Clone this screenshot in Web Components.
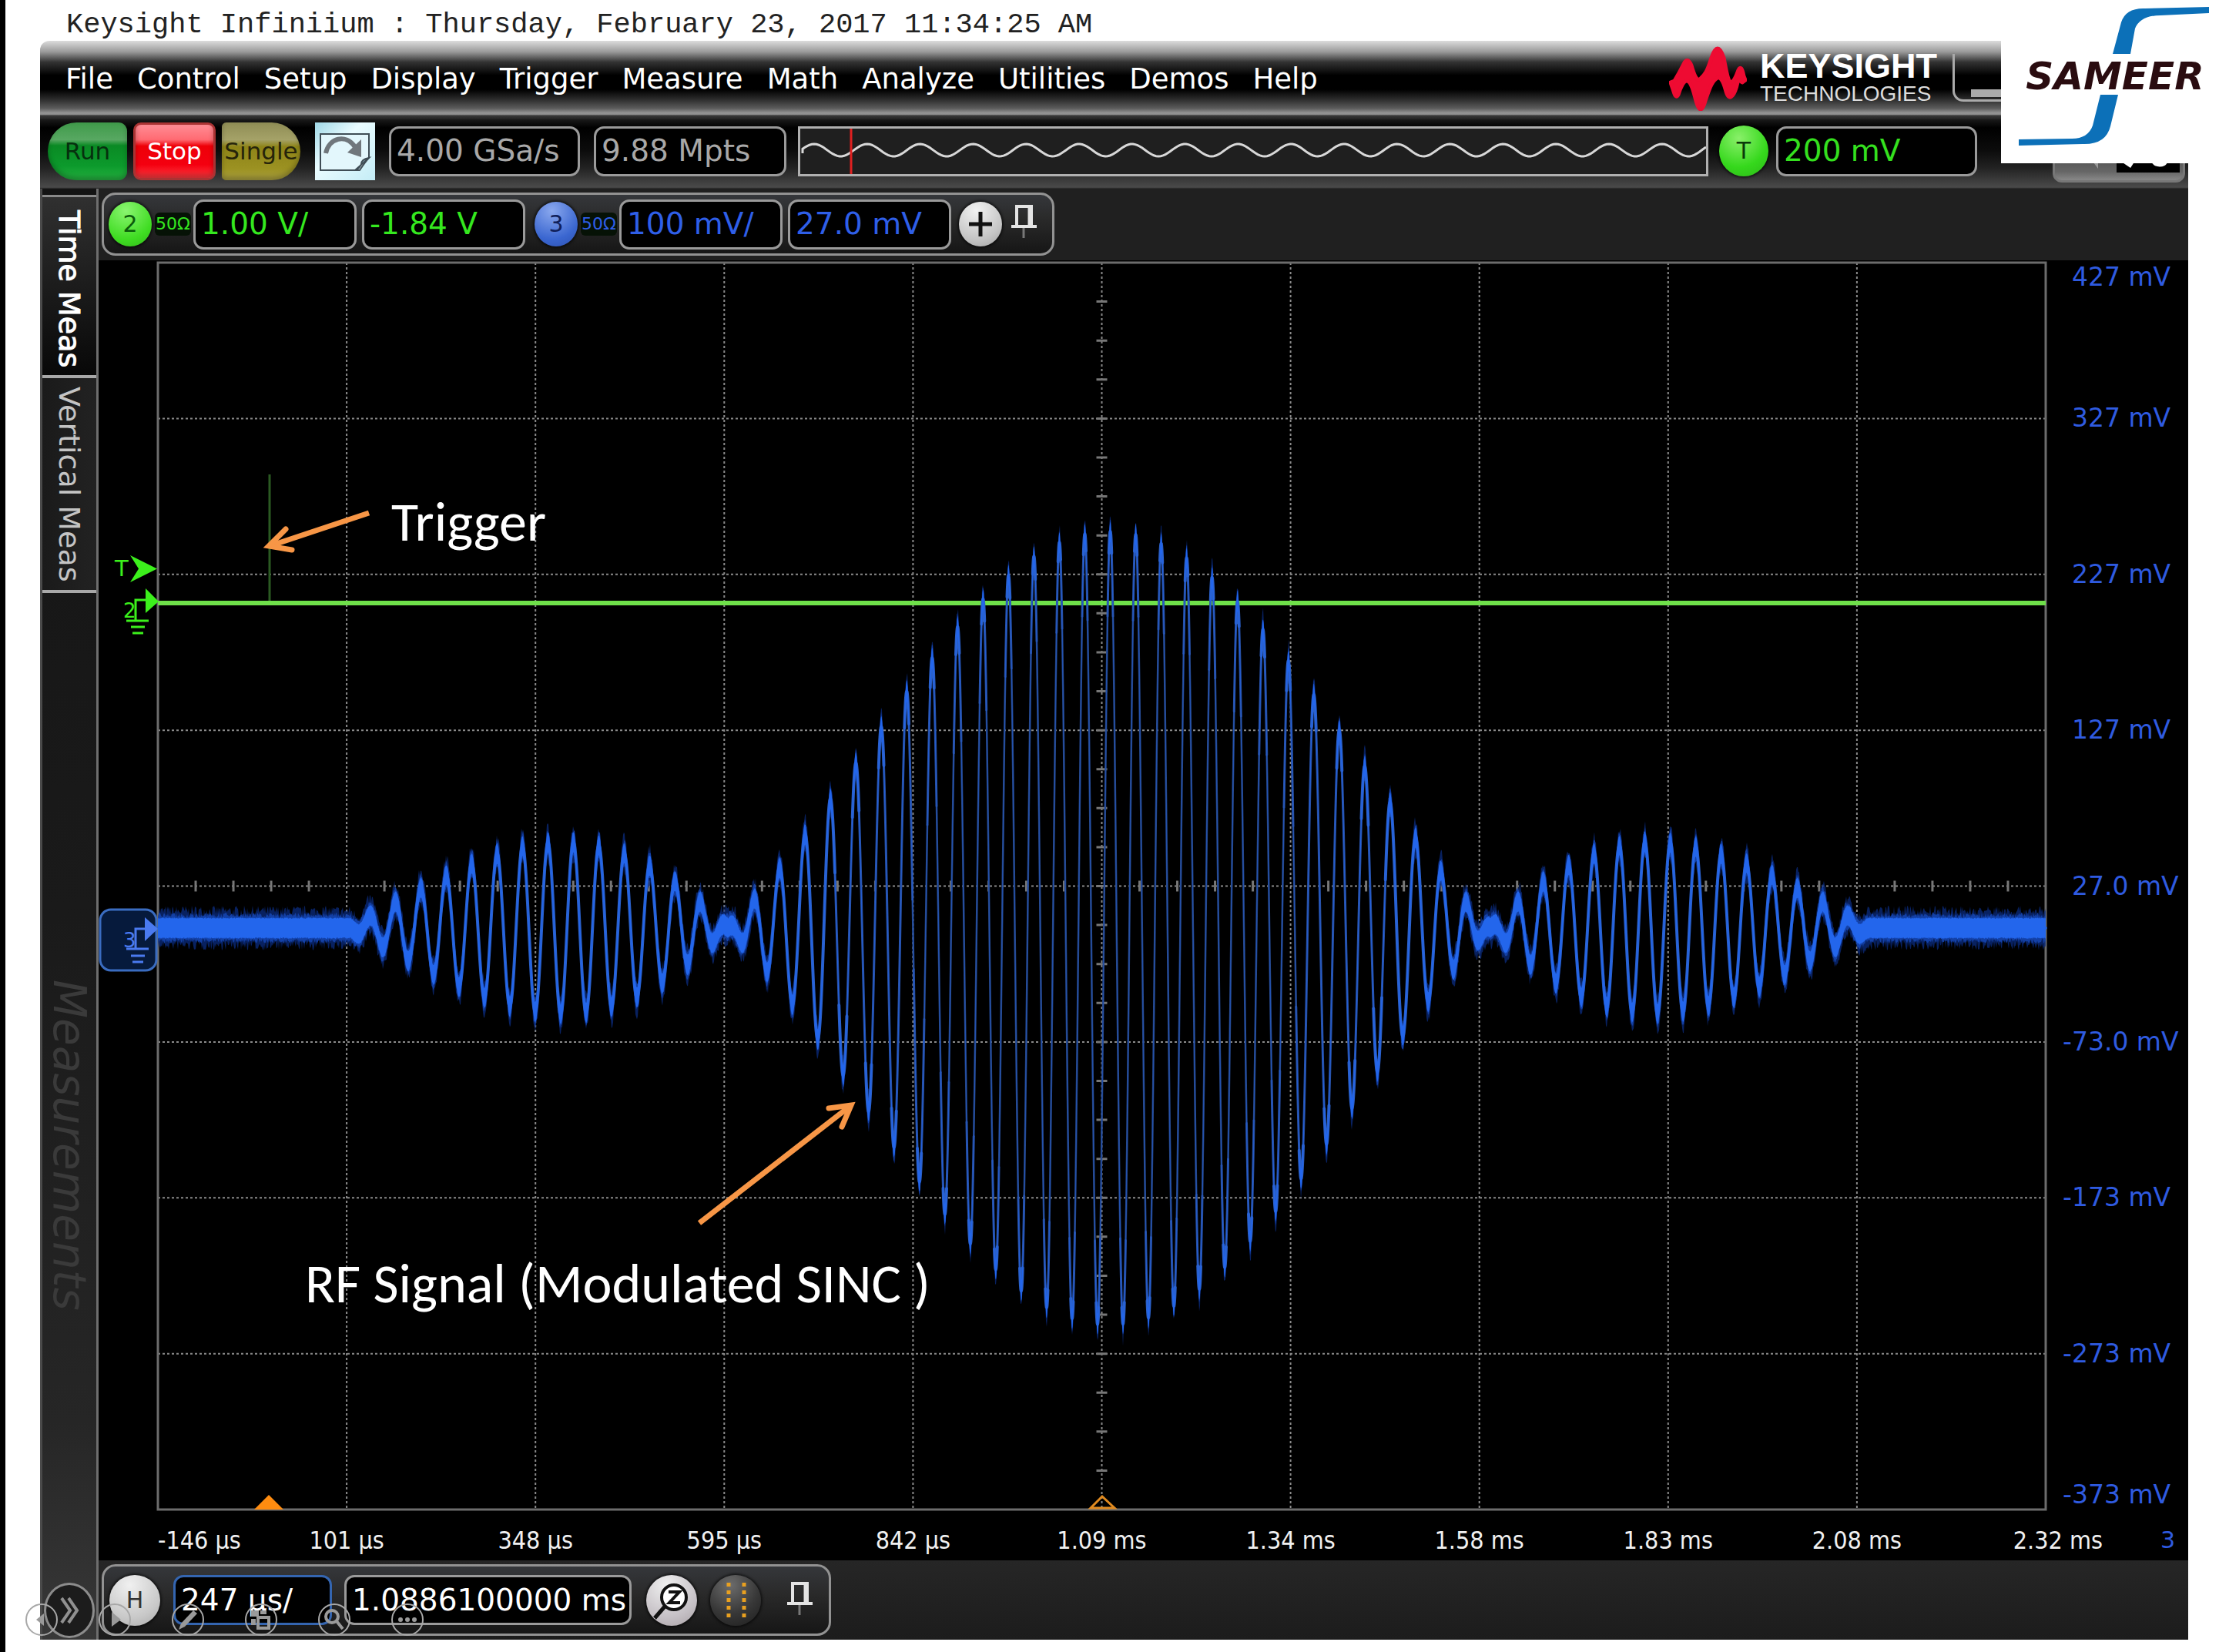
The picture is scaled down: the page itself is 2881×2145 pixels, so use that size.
<!DOCTYPE html>
<html lang="en">
<head>
<meta charset="utf-8">
<title>Keysight Infiniium</title>
<style>
  html, body { margin: 0; height: 100%; }
  body { background: #fff; font-family: "DejaVu Sans", Verdana, sans-serif; }
</style>
</head>
<body>
<scope-slide></scope-slide>

<script>
const define = (name, html, setup) => {
  const tpl = document.createElement('template');
  tpl.innerHTML = '<style>:host,*{box-sizing:border-box}button{font:inherit;color:inherit;margin:0;padding:0;border:0;background:none}svg{display:block}</style>' + html;
  customElements.define(name, class extends HTMLElement {
    constructor() {
      super();
      this.attachShadow({ mode: 'open' }).append(tpl.content.cloneNode(true));
    }
    connectedCallback() { if (setup) setup(this, this.shadowRoot); }
  });
};

/* boxed value */
define('scope-readout', `
<style>
  :host { display: block; height: 65px; flex: none; }
  button { width: 100%; height: 100%; border: 3px solid var(--edge, #9a9a9a); border-radius: 13px; background: #000;
    padding: 0 7px; text-align: left; font-size: 39px; line-height: 48px; white-space: nowrap; }
</style>
<button type="button"><slot></slot></button>`);

/* round knob */
define('scope-badge', `
<style>
  :host { display: block; width: 56px; height: 58px; flex: none; }
  button { width: 100%; height: 100%; border-radius: 50%; display: grid; place-items: center;
    background: var(--fill); font-size: 30px; line-height: 36px; box-shadow: 0 0 3px 2px #0008; }
</style>
<button type="button"><slot></slot></button>`);

define('scope-pin', `
<style>:host { display: block; width: 33px; flex: none; } button { display: block; }</style>
<button type="button" aria-label="Pin"><svg width="33" height="44" fill="none" stroke="#e4e4e4">
  <path d="M7 28V2h19v26" stroke-width="4"/><path d="M24 2v26" stroke-width="5"/><path d="M0 28h33" stroke-width="4"/><path d="M16 30v13" stroke="#777" stroke-width="3"/></svg></button>`);

define('scope-group', `
<style>
  :host { display: flex; align-items: center; border: 3px solid #929292; border-radius: 18px;
    background: linear-gradient(#35373b, #2a2a2a 40%, #161616); }
</style>
<slot></slot>`);

define('keysight-logo', `
<style>
  :host { display: flex; align-items: center; gap: 17px; color: #fff; font-family: "Liberation Sans", Arial, sans-serif; }
  strong { display: block; font-size: 45px; line-height: 40px; }
  span { display: block; font-size: 28px; line-height: 32px; color: #ddd; }
</style>
<svg width="101" height="84" viewBox="2165 59 101 84" fill="#ee0b32" stroke="#ee0b32" stroke-width="5" stroke-linejoin="round">
  <path d="M2167 106L2172 104C2178 94 2180 90 2184 82Q2189 72 2194 84C2198 98 2201 104 2205 102C2211 96 2214 94 2220 74Q2228 50 2236 74C2240 96 2242 106 2246 106C2250 104 2252 98 2255 90Q2259 82 2262 98L2264 103L2260 106C2257 104 2256 100 2254 106C2251 120 2244 134 2239 118C2236 106 2232 98 2228 100C2220 104 2217 116 2212 130Q2206 152 2200 130C2196 114 2192 104 2188 104C2184 104 2180 112 2177 122Q2174 128 2171 118Z"/></svg>
<div><strong>KEYSIGHT</strong><span>TECHNOLOGIES</span></div>`);

define('scope-menu', `
<style>
  :host { display: flex; align-items: center; height: 102px; padding: 0 0 0 33px; color: #fff;
    border-top-left-radius: 12px;
    background: linear-gradient(#dcdcdc, #9a9a9a 14%, #333 27%, #000 44%, #000 62%, #2a2a2a 74%, #5c5c5c 86%, #969696 92%, #888 94%, #3a3a3a 95%, #222); }
  nav { display: flex; gap: 31px; flex: 1; font-size: 37px; line-height: 46px; padding-bottom: 2px; }
  keysight-logo { margin-right: 20px; padding-bottom: 4px; }
  .win { width: 306px; height: 62px; margin-bottom: 6px; border: 3px solid #aaa; border-top: 0; border-radius: 0 0 14px 14px; padding: 42px 0 0 21px; }
  .win i { display: block; width: 60px; height: 10px; background: #aaa; }
</style>
<nav></nav>
<keysight-logo></keysight-logo>
<button class="win" type="button" aria-label="Minimize"><i></i></button>`, (el, root) => {
  root.querySelector('nav').innerHTML = ['File', 'Control', 'Setup', 'Display', 'Trigger', 'Measure', 'Math', 'Analyze', 'Utilities', 'Demos', 'Help']
    .map(t => `<button type="button">${t}</button>`).join('');
});

define('scope-toolbar', `
<style>
  :host { display: flex; align-items: center; height: 90px; padding: 0 4px 8px 10px;
    background: linear-gradient(#1a1a1a, #000 12%, #0c0c0c 45%, #222 70%, #4a4a4a 98%, #222); }
  .run { height: 75px; font-size: 31px; line-height: 38px; margin-right: 8px; box-shadow: inset 0 -4px 6px #0004; }
  .go { width: 103px; border-radius: 40px 12px 12px 40px; color: #06300e; background: linear-gradient(#3f9a4a, #58a862 30%, #0a8a24 40%, #0c9a2c 75%, #25b040); }
  .stop { width: 107px; border-radius: 10px; border: 3px solid #a33; color: #fff; background: linear-gradient(#ff8c94, #ff6a72 28%, #ee0008 40%, #f40010 75%, #ff3a40); }
  .one { width: 102px; border-radius: 6px 40px 40px 6px; color: #26240a; background: linear-gradient(#8f8d55, #a5a268 30%, #8e8418 42%, #9c9222 80%, #aaa040); margin-right: 19px; }
  .page { width: 78px; height: 75px; margin-right: 18px; background: linear-gradient(135deg, #9fd8e6, #eafcff 40%, #c4ecf6); }
  .rate { width: 248px; margin-right: 18px; color: #a8a8a8; }
  .pts { width: 250px; margin-right: 15px; color: #a8a8a8; }
  .wave { flex: 1; min-width: 0; height: 65px; border: 3px solid #b0b0b0; background: #1f1f1f; overflow: hidden; }
  .trig { width: 64px; height: 66px; margin: 0 10px 0 14px; color: #0a3a0a; }
  .level { width: 261px; margin-right: 98px; color: #35e01f; }
  .undo { width: 172px; height: 81px; border: 3px solid #777; border-radius: 12px; background: linear-gradient(#222, #666 85%, #888); }
</style>
<button class="run go" type="button">Run</button>
<button class="run stop" type="button">Stop</button>
<button class="run one" type="button">Single</button>
<button class="page" type="button" aria-label="Clear display"><svg width="78" height="75">
  <path d="M7 15H70V46Q66 50 58 62L54 62H7Z" fill="#e3f7fc" stroke="#3f4d55" stroke-width="2"/><path d="M70 46Q60 48 60 54Q58 60 52 62Z" fill="#9fc4d0" stroke="#3f4d55" stroke-width="2"/>
  <path d="M14 40C18 20 40 14 52 32" fill="none" stroke="#70777c" stroke-width="6"/><path d="M60 22V45L42 39Z" fill="#70777c"/></svg></button>
<scope-readout class="rate">4.00 GSa/s</scope-readout>
<scope-readout class="pts">9.88 Mpts</scope-readout>
<div class="wave"><svg width="100%" height="59"><path class="sine" fill="none" stroke="#d8d8d8" stroke-width="3"/><path d="M66 0V59" stroke="#e02020" stroke-width="3"/></svg></div>
<scope-badge class="trig" style="--fill:radial-gradient(circle at 40% 25%,#8af06a,#35d81c 60%,#2cb818)">T</scope-badge>
<scope-readout class="level">200 mV</scope-readout>
<button class="undo" type="button" aria-label="Undo"><svg width="166" height="75"><path d="M80 20h82v45h-82z" fill="#000"/>
  <path d="M44 44l12 16v-14" fill="#999"/><path d="M110 44l-22 4 12 8M128 40q-2 14 8 14t8-14" fill="none" stroke="#fff" stroke-width="7"/></svg></button>`,
(el, root) => {
  let d = 'M3 32';
  for (let x = 3; x < 1177; x += 3) d += `L${x} ${(28 - 8 * Math.cos((x - 18) / 68.8 * 2 * Math.PI)).toFixed(1)}`;
  root.querySelector('.sine').setAttribute('d', d);
});

define('scope-channels', `
<style>
  :host { display: flex; align-items: flex-start; height: 93px; padding: 5px 0 0 4px; background: #202020; }
  scope-group { height: 82px; padding: 0 20px 0 6px; }
  small { font-size: 22px; line-height: 30px; background: #061206; border-radius: 6px; margin: 0 3px 0 4px; width: 47px; text-align: center; }
  scope-readout { width: 212px; margin-right: 7px; }
  .g { color: #35e81f; } .b { color: #2f5fe8; }
  scope-badge { font-size: 24px; }
  scope-badge.two { color: #0a5a0a; } scope-badge.three { color: #10205a; margin-left: 5px; }
  scope-badge.add { margin: 0 12px 0 3px; }
  scope-pin { padding-bottom: 6px; }
</style>
<scope-group>
  <scope-badge class="two" style="--fill:radial-gradient(circle at 40% 20%,#8af570,#3fdc22 65%,#30b818)">2</scope-badge>
  <small class="g">50Ω</small>
  <scope-readout class="g">1.00 V/</scope-readout>
  <scope-readout class="g">-1.84 V</scope-readout>
  <scope-badge class="three" style="--fill:radial-gradient(circle at 40% 20%,#8aa8ee,#3a66d0 65%,#2c50b0)">3</scope-badge>
  <small class="b">50Ω</small>
  <scope-readout class="b">100 mV/</scope-readout>
  <scope-readout class="b">27.0 mV</scope-readout>
  <scope-badge class="add" aria-label="Add" style="--fill:radial-gradient(circle at 40% 20%,#f2f2f2,#c4c4c4 65%,#a0a0a0)"><svg width="32" height="34"><path d="M16 1V33M1 17H31" stroke="#111" stroke-width="5"/></svg></scope-badge>
  <scope-pin></scope-pin>
</scope-group>`);

define('scope-sidebar', `
<style>
  :host { display: flex; flex-direction: column; width: 76px; padding-top: 8px; border-left: 3px solid #4a4a4a;
    border-right: 3px solid #6e6e6e; background: linear-gradient(#141414, #1a1a1a 50%, #262626 85%, #383838); flex: none; }
  button { writing-mode: vertical-rl; text-align: left; width: 100%; font-size: 38px; line-height: 66px; color: #c4c4c4; }
  .tab { border-bottom: 4px solid #a8a8a8; padding-top: 11px; height: 279px; background: linear-gradient(90deg, #1a1a1a, #222); }
  .on { color: #fff; -webkit-text-stroke: 1px #fff; height: 238px; padding-top: 17px; border-top: 3px solid #8a8a8a; background: linear-gradient(#303030, #080808); }
  .name { writing-mode: vertical-rl; font-size: 58px; line-height: 70px; font-style: italic; color: #3a3a3a; padding-top: 502px; flex: 1; }
  .more { writing-mode: horizontal-tb; width: 66px; height: 72px; margin: 0 auto 2px; border: 3px solid #8c8c8c; border-radius: 50%; background: #1c1c1c; display: grid; place-items: center; }
</style>
<button class="tab on" type="button">Time Meas</button>
<button class="tab" type="button">Vertical Meas</button>
<div class="name">Measurements</div>
<button class="more" type="button" aria-label="Expand"><svg width="26" height="36" fill="none" stroke="#909090" stroke-width="4"><path d="M3 2L14 18L3 34M12 2L23 18L12 34"/></svg></button>`);

/* graticule, traces and callouts, drawn in one coordinate space */
define('scope-trace', `
<style>
  :host { display: block; min-width: 0; min-height: 0; }
  svg { width: 100%; height: 100%; overflow: visible; }
  .note { font: 72px Carlito, Lato, sans-serif; fill: #fff; }
</style>
<svg viewBox="205 341 2451 1619">
  <g class="grid" fill="none" stroke="#8a8a8a"></g>
  <rect x="205" y="341" width="2451" height="1619" fill="none" stroke="#6c6c6c" stroke-width="3"/>
  <path d="M350 616V783" stroke="#2b5a22" stroke-width="3"/>
  <path d="M205 783H2656" stroke="#6fe04a" stroke-width="6"/>
  <g class="rf"></g>
  <g fill="#3cf01c" stroke="none">
    <path d="M169 721L204 738.500L169 756L180 738.500Z"/><path d="M189 764L206 781L189 796Z"/>
    <path d="M176 805V779H190M164 806H193M170 814H188M172 822H186" fill="none" stroke="#3cf01c" stroke-width="3"/>
    <text x="149" y="748" font-size="29">T</text><text x="160" y="802" font-size="26">2</text>
  </g>
  <rect x="130" y="1181" width="73" height="79" rx="14" fill="#061a3c" stroke="#3a6cc0" stroke-width="3"/>
  <g fill="#4a7af0">
    <path d="M188 1191L205 1206L188 1222Z"/>
    <path d="M176 1232V1206H190M164 1232H193M170 1241H188M172 1249H186" fill="none" stroke="#4a7af0" stroke-width="3"/>
    <text x="160" y="1230" font-size="26">3</text>
  </g>
  <path d="M330 1960L349 1941L368 1960Z" fill="#ff8c10"/>
  <path d="M1416 1958L1431 1943L1447 1958Z" fill="none" stroke="#e08a20" stroke-width="3"/>
  <g fill="none" stroke="#f79646" stroke-width="7">
    <path d="M479 666L350 709M908 1588L1104 1436"/>
    <path d="M371 687L349 709L379 714M1076 1439L1105 1435L1093 1463" stroke-linecap="round"/>
  </g>
  <text class="note" x="508" y="702">Trigger</text>
  <text class="note" x="396" y="1691">RF Signal (Modulated SINC )</text>
</svg>`, (el, root) => {
  const L = 205, T = 341, W = 2451, H = 1619;
  let dots = '', ticks = '';
  for (let i = 1; i < 8; i++) dots += `M${L} ${T + H * i / 8}h${W}`;
  for (let i = 1; i < 10; i++) dots += `M${L + W * i / 10} ${T}v${H}`;
  for (let i = 1; i < 50; i++) if (i % 5) ticks += `M${L + W * i / 50} ${T + H / 2 - 7}v14`;
  for (let i = 1; i < 32; i++) ticks += `M${L + W / 2 - 7} ${T + H * i / 32}h14`;
  root.querySelector('.grid').innerHTML = `<path d="${dots}" stroke-width="2" stroke-dasharray="3 3"/><path d="${ticks}" stroke="#777" stroke-width="3"/>`;

  /* |sinc| envelope on a carrier, with a noise band around it */
  const mid = 1205, cx = 1440, lobe = 495, period = 33.05;
  const signal = x => {
    const u = (x - cx) / lobe;
    if (Math.abs(u) > 1.99) return mid;
    const env = u === 0 ? 1 : Math.abs(Math.sin(Math.PI * u) / (Math.PI * u));
    const x0 = u < -1 ? 1438.5 : 1441.5;
    return mid - 515 * env * Math.cos(2 * Math.PI * (x - x0) / period);
  };
  let seed = 7;
  const rnd = () => (seed = (seed * 16807) % 2147483647) / 2147483647;
  const band = (h, jitter, step) => {
    const up = [], down = [];
    for (let x = L; x <= L + W; x += step) {
      const y = signal(x);
      up.push(`${x} ${(y - h - rnd() * jitter).toFixed(1)}`);
      down.unshift(`${x} ${(y + h + rnd() * jitter).toFixed(1)}`);
    }
    return 'M' + up.concat(down).join('L') + 'Z';
  };
  /* the beam is brighter and wider where the trace moves slowly */
  const runs = ['', '', ''];
  for (let x = L; x < L + W; x += 0.25) {
    const a = signal(x), b = signal(x + 0.25), slope = Math.abs(b - a) * 4;
    runs[slope < 30 ? 0 : slope < 60 ? 1 : 2] += `M${x} ${a.toFixed(1)}L${x + 0.25} ${b.toFixed(1)}`;
  }
  root.querySelector('.rf').innerHTML =
    `<path d="${band(15, 14, 1)}" fill="#0b2c80" opacity=".75"/>
     <path d="${band(13, 7, 1)}" fill="#1748b8" opacity=".8"/>
     <path d="${runs[2]}" stroke="#26498e" stroke-width="2.500" stroke-linecap="round"/>
     <path d="${runs[1]}" stroke="#2852a8" stroke-width="3" stroke-linecap="round"/>
     <path d="${runs[0]}" stroke="#2b60c8" stroke-width="4" stroke-linecap="round"/>
     <path d="${band(12, 2, .5)}" fill="#2366ec"/>`;
});

define('scope-plot', `
<style>
  :host { display: grid; grid-template: minmax(0, 1fr) 66px / minmax(0, 1fr) 185px; padding: 3px 0 0 77px; background: #000; flex: 1; min-height: 0; }
  .y { display: flex; flex-direction: column; color: #2f5be0; font-size: 33px; line-height: 38px; padding-left: 22px; white-space: pre; }
  .y span { flex: 2 1 0; display: flex; align-items: center; padding: 0 0 4px 12px; }
  .y span.neg { padding-left: 0; }
  .y span:first-child { flex-grow: 1; align-items: flex-start; }
  .y span:last-child { flex-grow: 1; align-items: flex-end; padding-bottom: 0; }
  .x { grid-column: 1 / -1; display: flex; align-items: center; padding-top: 14px; color: #f0f0f0; font: 32px/38px "DejaVu Sans Condensed", "DejaVu Sans", sans-serif; font-stretch: condensed; white-space: nowrap; }
  .x div { flex: 1; display: flex; min-width: 0; }
  .x span { flex: 2 1 0; display: flex; justify-content: center; min-width: 0; }
  .x span:first-child { flex-grow: 1; justify-content: flex-start; }
  .x span:last-child { flex-grow: 1; justify-content: flex-end; margin-right: -74px; padding-left: 74px; }
  .x b { flex: none; width: 185px; padding-right: 17px; text-align: right; font: 30px/38px "DejaVu Sans", sans-serif; color: #2f5be0; }
</style>
<scope-trace></scope-trace>
<div class="y"></div>
<div class="x"><div></div><b>3</b></div>`, (el, root) => {
  root.querySelector('.y').innerHTML = ['427', '327', '227', '127', '27.0', '-73.0', '-173', '-273', '-373']
    .map(v => `<span class="${v[0] === '-' ? 'neg' : ''}">${v} mV</span>`).join('');
  root.querySelector('.x div').innerHTML = ['-146 µs', '101 µs', '348 µs', '595 µs', '842 µs', '1.09 ms', '1.34 ms', '1.58 ms', '1.83 ms', '2.08 ms', '2.32 ms']
    .map(v => `<span>${v}</span>`).join('');
});

define('scope-timebase', `
<style>
  :host { display: flex; align-items: flex-start; height: 103px; padding: 5px 0 0 4px; background: linear-gradient(#262626, #1c1c1c); color: #fff; flex: none; }
  scope-group { height: 93px; padding: 0 21px 0 7px; }
  scope-badge { width: 66px; height: 66px; }
  .h { color: #333; margin-right: 17px; }
  .scale { width: 206px; margin-right: 16px; --edge: #3465b0; }
  .pos { width: 373px; margin-right: 19px; }
  .zoom { margin-right: 17px; } .cur { margin-right: 34px; }
  scope-pin { padding-bottom: 4px; }
</style>
<scope-group>
  <scope-badge class="h" style="--fill:radial-gradient(circle at 40% 20%,#f0f0f0,#c8c8c8 65%,#a8a8a8)">H</scope-badge>
  <scope-readout class="scale">247 µs/</scope-readout>
  <scope-readout class="pos">1.0886100000 ms</scope-readout>
  <scope-badge class="zoom" aria-label="Zoom" style="--fill:radial-gradient(circle at 40% 20%,#f0f0f0,#c4bfc4 65%,#a8a0a4)">
    <svg width="56" height="56" fill="none" stroke="#111"><circle cx="31" cy="24" r="16" fill="#fff" stroke-width="4"/><path d="M24 17H38L25 31H39" stroke-width="4"/><path d="M19 36L6 51" stroke-width="5"/></svg></scope-badge>
  <scope-badge class="cur" aria-label="Markers" style="--fill:radial-gradient(circle at 40% 20%,#6c6c6c,#383838 55%,#1c1c1c)">
    <svg width="40" height="52" stroke="#e8a020" stroke-width="5" stroke-dasharray="5 5"><path d="M11 3V50M31 3V50"/></svg></scope-badge>
  <scope-pin></scope-pin>
</scope-group>`);

define('sameer-logo', `
<style>
  :host { display: block; width: 283px; height: 212px; background: #fff; }
  text { font: italic bold 50px "DejaVu Sans", Verdana, sans-serif; fill: #2a0c10; }
</style>
<svg width="283" height="212" viewBox="2598 0 283 212">
  <path d="M2868 9V17L2805 20Q2779 20 2772 37L2766 70H2743L2754 29Q2760 10 2785 11ZM2727 123H2750L2740 164Q2734 188 2704 187L2621 189V181L2690 180Q2711 180 2717 163Z" fill="#0c70b8"/>
  <text x="2746" y="116" text-anchor="middle">SAMEER</text>
</svg>`);

define('slide-controls', `
<style>
  :host { display: flex; gap: 53px; }
  button { display: block; width: 42px; height: 42px; }
  svg { stroke: #a8a8a8; fill: none; stroke-width: 2; }
  .f { fill: #9a9a9a; stroke: none; } .s { stroke: #9a9a9a; stroke-width: 4; }
</style>`, (el, root) => {
  const icons = {
    Previous: '<path class="f" d="M24 13V29L14 21Z"/>',
    Next: '<path class="f" d="M17 11V30L29 21Z"/>',
    Pen: '<path class="f" d="M28 9L33 13L17 30L9 34L12 26Z"/>',
    Slides: '<path class="f" d="M8 9H18V17H8ZM20 9H28V14H20ZM8 20H14V28H8Z"/><rect class="s" x="17" y="18" width="14" height="14"/>',
    Magnify: '<circle class="s" cx="18" cy="17" r="8"/><path class="s" d="M24 23L32 33"/>',
    More: '<g class="f"><circle cx="12" cy="21" r="3"/><circle cx="21" cy="21" r="3"/><circle cx="30" cy="21" r="3"/></g>'
  };
  root.innerHTML += Object.entries(icons).map(([n, i]) =>
    `<button type="button" aria-label="${n}"><svg width="42" height="42"><circle cx="21" cy="21" r="20"/>${i}</svg></button>`).join('');
});

define('scope-slide', `
<style>
  :host { display: flex; flex-direction: column; position: relative; height: 100vh; min-height: 1100px; border-left: 7px solid #000; padding: 0 40px 16px 45px; overflow: hidden; }
  header { height: 53px; padding: 11px 0 0 34px; font: 37px/42px "Liberation Mono", "Courier New", monospace; color: #222; white-space: nowrap; flex: none; }
  .body { flex: 1; display: flex; min-height: 0; }
  main { flex: 1; display: flex; flex-direction: column; min-width: 0; }
  scope-menu, scope-toolbar, scope-channels { flex: none; }
  sameer-logo { position: absolute; top: 0; right: 0; }
  slide-controls { position: absolute; left: 26px; bottom: 21px; }
</style>
<header>Keysight Infiniium : Thursday, February 23, 2017 11:34:25 AM</header>
<scope-menu></scope-menu>
<scope-toolbar></scope-toolbar>
<div class="body">
  <scope-sidebar></scope-sidebar>
  <main>
    <scope-channels></scope-channels>
    <scope-plot></scope-plot>
    <scope-timebase></scope-timebase>
  </main>
</div>
<sameer-logo></sameer-logo>
<slide-controls></slide-controls>`);
</script>
</body>
</html>
